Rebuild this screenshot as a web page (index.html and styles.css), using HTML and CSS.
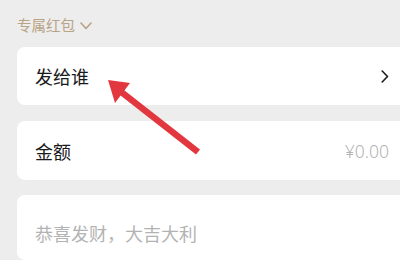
FILE: index.html
```html
<!DOCTYPE html>
<html>
<head>
<meta charset="utf-8">
<link rel="stylesheet" href="styles.css">
</head>
<body>
<div class="page">
  <div class="header">
    <span class="header-title">专属红包</span>
    <svg class="header-chev" width="12" height="8" viewBox="0 0 12 8"><path d="M1 1 L6 6.5 L11 1" fill="none" stroke="#b8a384" stroke-width="1.6" stroke-linecap="round" stroke-linejoin="round"/></svg>
  </div>
  <div class="card row">
    <span class="label">发给谁</span>
    <svg class="chev" width="8" height="13" viewBox="0 0 8 13"><path d="M1.2 1 L6.5 6.5 L1.2 12" fill="none" stroke="#1a1a1a" stroke-width="1.6" stroke-linecap="round" stroke-linejoin="round"/></svg>
  </div>
  <div class="card row">
    <span class="label">金额</span>
    <span class="amount">¥0.00</span>
  </div>
  <div class="card note">
    <span class="placeholder">恭喜发财，大吉大利</span>
  </div>
</div>
<svg class="arrow" width="400" height="260" viewBox="0 0 400 260">
  <line x1="198" y1="152" x2="120" y2="91" stroke="#e2373f" stroke-width="6.5" stroke-linecap="butt"/>
  <polygon points="108,80 130,83 115,103" fill="#e2373f"/>
</svg>
</body>
</html>
```
FILE: styles.css
```css
html, body {
  margin: 0;
  padding: 0;
  background: #ededed;
  overflow: hidden;
  width: 400px;
  height: 260px;
}
body {
  position: relative;
  font-family: "Noto Sans CJK SC", "Noto Sans", sans-serif;
}
.page {
  padding: 14px 0 0 17px;
  display: flex;
  flex-direction: column;
}
.header {
  display: flex;
  align-items: center;
  height: 22px;
  margin-bottom: 11px;
}
.header-title {
  font-size: 14.5px;
  color: #b8a384;
  line-height: 22px;
}
.header-chev {
  margin-left: 5px;
  margin-top: 1px;
}
.card {
  background: #ffffff;
  border-radius: 8px;
  width: 400px;
  box-sizing: border-box;
}
.row {
  height: 58px;
  display: flex;
  align-items: center;
  padding: 0 26px 0 18px;
  margin-bottom: 16px;
}
.row + .row {
  height: 59px;
  margin-bottom: 15px;
}
.label {
  font-size: 18px;
  color: #1a1a1a;
  flex: 1;
}
.chev {
  margin-right: 2px;
}
.amount {
  font-size: 17.5px;
  color: #b3b3b3;
  font-family: "Noto Sans", "Noto Sans CJK SC", sans-serif;
  font-weight: 300;
  margin-right: 2px;
}
.note {
  height: 65px;
  padding: 25px 18px 0;
}
.placeholder {
  font-size: 18px;
  color: #b3b3b3;
  line-height: 26px;
}
.arrow {
  position: absolute;
  left: 0;
  top: 0;
  pointer-events: none;
}
```
